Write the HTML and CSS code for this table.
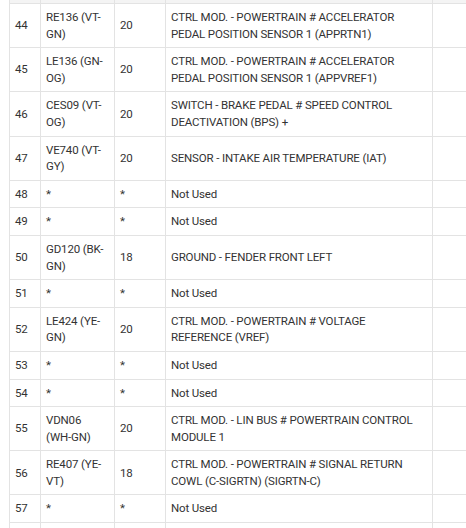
FILE: index.html
```html
<!DOCTYPE html>
<html>
<head>
<meta charset="utf-8">
<link rel="stylesheet" href="styles.css">
</head>
<body>
<table class="pins">
  <colgroup>
    <col class="c-pin"><col class="c-circuit"><col class="c-gauge"><col class="c-func"><col class="c-extra">
  </colgroup>
  <tbody>
    <tr class="cut-top"><td></td><td></td><td></td><td></td><td></td></tr>
    <tr><td>44</td><td class="circuit">RE136 (VT-GN)</td><td>20</td><td>CTRL MOD. - POWERTRAIN # ACCELERATOR PEDAL POSITION SENSOR 1 (APPRTN1)</td><td></td></tr>
    <tr><td>45</td><td class="circuit">LE136 (GN-OG)</td><td>20</td><td>CTRL MOD. - POWERTRAIN # ACCELERATOR PEDAL POSITION SENSOR 1 (APPVREF1)</td><td></td></tr>
    <tr><td>46</td><td class="circuit">CES09 (VT-OG)</td><td>20</td><td>SWITCH - BRAKE PEDAL # SPEED CONTROL DEACTIVATION (BPS) +</td><td></td></tr>
    <tr><td>47</td><td class="circuit">VE740 (VT-GY)</td><td>20</td><td>SENSOR - INTAKE AIR TEMPERATURE (IAT)</td><td></td></tr>
    <tr><td>48</td><td class="circuit">*</td><td>*</td><td>Not Used</td><td></td></tr>
    <tr><td>49</td><td class="circuit">*</td><td>*</td><td>Not Used</td><td></td></tr>
    <tr><td>50</td><td class="circuit">GD120 (BK-GN)</td><td>18</td><td>GROUND - FENDER FRONT LEFT</td><td></td></tr>
    <tr><td>51</td><td class="circuit">*</td><td>*</td><td>Not Used</td><td></td></tr>
    <tr><td>52</td><td class="circuit">LE424 (YE-GN)</td><td>20</td><td>CTRL MOD. - POWERTRAIN # VOLTAGE REFERENCE (VREF)</td><td></td></tr>
    <tr><td>53</td><td class="circuit">*</td><td>*</td><td>Not Used</td><td></td></tr>
    <tr><td>54</td><td class="circuit">*</td><td>*</td><td>Not Used</td><td></td></tr>
    <tr><td>55</td><td class="circuit">VDN06 (WH-GN)</td><td>20</td><td>CTRL MOD. - LIN BUS # POWERTRAIN CONTROL MODULE 1</td><td></td></tr>
    <tr><td>56</td><td class="circuit">RE407 (YE-VT)</td><td>18</td><td>CTRL MOD. - POWERTRAIN # SIGNAL RETURN COWL (C-SIGRTN) (SIGRTN-C)</td><td></td></tr>
    <tr><td>57</td><td class="circuit">*</td><td>*</td><td>Not Used</td><td></td></tr>
    <tr class="cut-bottom"><td></td><td></td><td></td><td></td><td></td></tr>
  </tbody>
</table>
</body>
</html>
```
FILE: styles.css
```css
html, body {
  margin: 0;
  padding: 0;
  background: #fff;
  overflow: hidden;
}
body {
  font-family: Roboto, "Liberation Sans", sans-serif;
  font-size: 11.5px;
  letter-spacing: -0.15px;
  color: #333;
}
.pins {
  border-collapse: collapse;
  table-layout: fixed;
  width: 540px;
  margin-left: 9px;
}
.c-pin { width: 31px; }
.c-circuit { width: 74px; }
.c-gauge { width: 51px; }
.c-func { width: 267px; }
.c-extra { width: 117px; }
.pins td {
  border: 1px solid #e3e3e3;
  padding: 5px;
  line-height: 16.6px;
  vertical-align: middle;
  text-align: left;
}
.pins td.circuit {
  padding-right: 9px;
}
.pins tr.cut-top td {
  height: 3px;
  padding: 0;
  line-height: 0;
  background: #f4f4f4;
  border-top: 0;
}
.pins tr.cut-bottom td {
  height: 26px;
}
```
